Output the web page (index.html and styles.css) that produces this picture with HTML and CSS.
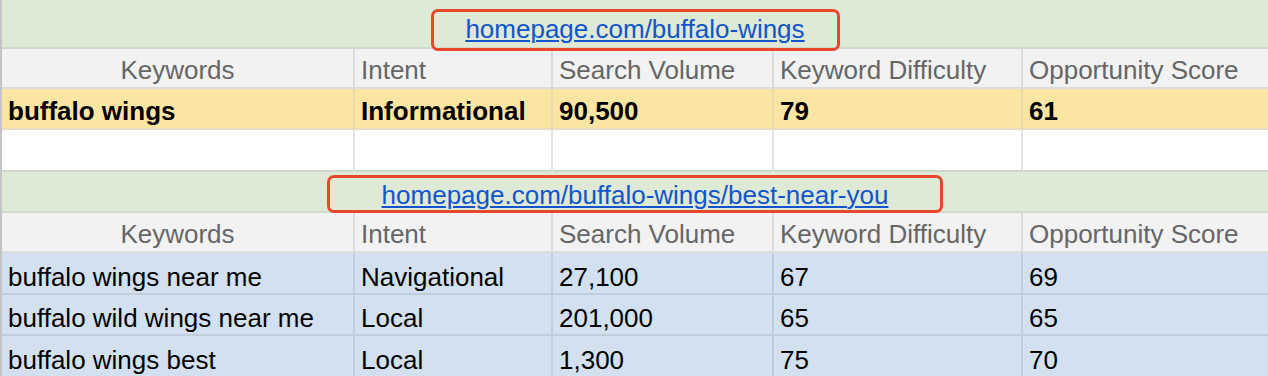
FILE: index.html
```html
<!DOCTYPE html>
<html>
<head>
<meta charset="utf-8">
<link rel="stylesheet" href="styles.css">
</head>
<body>
<div class="sheet">
  <div class="row url-row top">
    <div class="cell span"><span class="link link-a"><a href="#">homepage.com/buffalo-wings</a></span></div>
  </div>
  <div class="row head">
    <div class="cell center">Keywords</div>
    <div class="cell">Intent</div>
    <div class="cell">Search Volume</div>
    <div class="cell">Keyword Difficulty</div>
    <div class="cell">Opportunity Score</div>
  </div>
  <div class="row main">
    <div class="cell">buffalo wings</div>
    <div class="cell">Informational</div>
    <div class="cell">90,500</div>
    <div class="cell">79</div>
    <div class="cell">61</div>
  </div>
  <div class="row empty">
    <div class="cell"></div>
    <div class="cell"></div>
    <div class="cell"></div>
    <div class="cell"></div>
    <div class="cell"></div>
  </div>
  <div class="row url-row">
    <div class="cell span"><span class="link link-b"><a href="#">homepage.com/buffalo-wings/best-near-you</a></span></div>
  </div>
  <div class="row head">
    <div class="cell center">Keywords</div>
    <div class="cell">Intent</div>
    <div class="cell">Search Volume</div>
    <div class="cell">Keyword Difficulty</div>
    <div class="cell">Opportunity Score</div>
  </div>
  <div class="row data">
    <div class="cell">buffalo wings near me</div>
    <div class="cell">Navigational</div>
    <div class="cell">27,100</div>
    <div class="cell">67</div>
    <div class="cell">69</div>
  </div>
  <div class="row data">
    <div class="cell">buffalo wild wings near me</div>
    <div class="cell">Local</div>
    <div class="cell">201,000</div>
    <div class="cell">65</div>
    <div class="cell">65</div>
  </div>
  <div class="row data">
    <div class="cell">buffalo wings best</div>
    <div class="cell">Local</div>
    <div class="cell">1,300</div>
    <div class="cell">75</div>
    <div class="cell">70</div>
  </div>
</div>
</body>
</html>
```
FILE: styles.css
```css
html, body {
  margin: 0;
  padding: 0;
  background: #ffffff;
}
body {
  font-family: "Liberation Sans", Arial, sans-serif;
  font-size: 26px;
  color: #000;
  overflow: hidden;
}
.sheet {
  width: 1268px;
  border-left: 2px solid #c4c4c4;
  box-sizing: border-box;
}
.row {
  display: grid;
  grid-template-columns: 353px 198px 221px 249px 1fr;
  height: 41px;
}
.cell {
  box-sizing: border-box;
  border-right: 2px solid #dcdcdc;
  border-bottom: 2px solid #dcdcdc;
  padding: 0 6px 2px 6px;
  display: flex;
  align-items: flex-end;
  white-space: nowrap;
  line-height: 30px;
}
.cell.center { justify-content: center; }
.cell:last-child { border-right: none; }

.url-row { grid-template-columns: 1fr; background: #dee9d6; }
.url-row .cell { justify-content: center; border-bottom-color: #d2d8cd; padding-bottom: 1px; }
.url-row.top { height: 49px; }
.url-row.top .cell { padding-bottom: 3px; }

.head { height: 40px; background: #f2f2f2; color: #666666; }
.head .cell { padding-bottom: 2px; }

.main { background: #fbe5a2; font-weight: bold; }
.main .cell { border-color: #ebd9a8; }
.main .cell { border-bottom-color: #e8dcc0; }

.empty { height: 42px; background: #ffffff; }
.empty .cell { border-right-color: #e4e4e4; border-bottom-color: #cfd6ca; }

.data { background: #d3e0ef; height: 42px; }
.data:nth-of-type(8) { height: 41px; }
.data .cell { border-color: #bfcddd; padding-bottom: 1px; }

.link { position: relative; display: inline-block; }
.link a { color: #1155cc; text-decoration: underline; text-underline-offset: 2px; text-decoration-thickness: 2px; }
.link::before {
  content: "";
  position: absolute;
  border: 3px solid #e8472c;
  border-radius: 7px;
  pointer-events: none;
}
.link-a::before { left: -34px; right: -35px; top: -5px; bottom: -7px; }
.link-b::before { left: -55px; right: -55px; top: -5px; bottom: -3px; }
```
